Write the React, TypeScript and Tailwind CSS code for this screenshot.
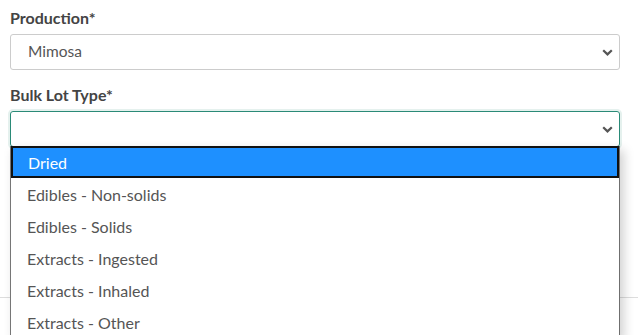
import React from 'react';

const options = [
  'Dried',
  'Edibles - Non-solids',
  'Edibles - Solids',
  'Extracts - Ingested',
  'Extracts - Inhaled',
  'Extracts - Other',
];

const Chevron = () => (
  <svg width="11" height="7" viewBox="0 0 11 7" className="shrink-0">
    <path d="M1.2 1.2 L5.5 5.4 L9.8 1.2" fill="none" stroke="#555" strokeWidth="2.2" />
  </svg>
);

export default function App() {
  return (
    <div className="relative w-[638px] h-[335px] overflow-hidden bg-white font-['Lato','Liberation_Sans',sans-serif] text-[#444]">
      <div className="pl-[10px] pr-[18px] pt-[7px]">
        {/* Production */}
        <label className="block text-[16px] leading-[22px] font-bold text-[#444]">Production*</label>
        <div className="mt-[5px] h-[36px] flex items-center justify-between border border-[#ccc] rounded-[3px] pl-[17px] pr-[6px] text-[15.5px] text-[#555]">
          <span>Mimosa</span>
          <Chevron />
        </div>

        {/* Bulk Lot Type */}
        <label className="block mt-[14px] text-[16px] leading-[22px] font-bold text-[#444]">Bulk Lot Type*</label>
        <div className="relative mt-[5px]">
          <div className="h-[36px] flex items-center justify-end border border-[#2a8a77] rounded-[3px] pr-[6px] shadow-[0_0_0_2px_rgba(42,138,119,0.12)]">
            <Chevron />
          </div>

          {/* Open list */}
          <ul className="absolute left-0 top-[35px] w-[610px] z-10 bg-white border-l border-r border-[#767676] border-r-[#6f6f6f] shadow-[4px_4px_10px_rgba(0,0,0,0.18)]">
            {options.map((opt, i) => (
              <li
                key={opt}
                className={
                  i === 0
                    ? 'h-[32px] flex items-center pl-[15px] pt-[1px] text-[16px] text-white bg-[#1e90ff] border-2 border-[#111]'
                    : 'h-[32px] flex items-center pl-[16px] pt-[2px] text-[16px] text-[#555]'
                }
              >
                {opt}
              </li>
            ))}
          </ul>
        </div>
      </div>

      {/* divider behind the list */}
      <div className="mt-[150px] border-t border-[#ddd]" />
    </div>
  );
}
